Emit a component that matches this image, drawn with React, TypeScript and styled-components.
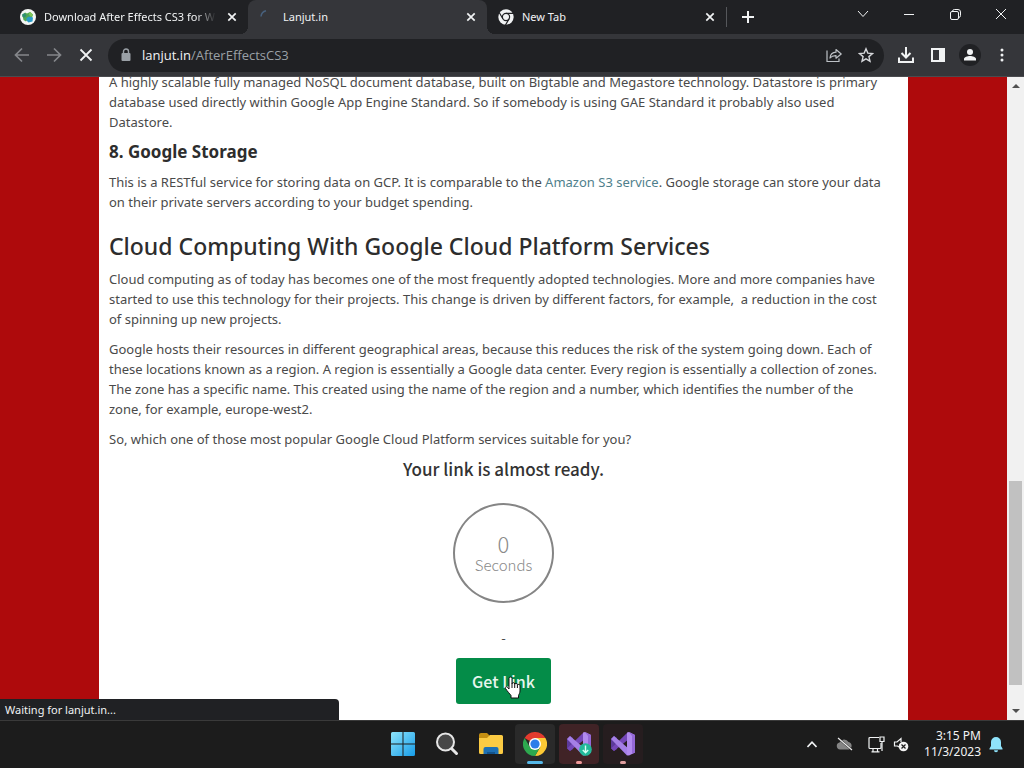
import React from "react";
import styled, { createGlobalStyle, css } from "styled-components";

const GlobalStyle = createGlobalStyle`
  * { box-sizing: border-box; }
  body { margin: 0; background: #1c1c1c; font-family: "Noto Sans", "Open Sans", sans-serif; }
  button { border: 0; padding: 0; margin: 0; background: none; color: inherit; font: inherit; }
  svg { display: block; flex: none; }
`;

const Screen = styled.div`
  height: 100vh;
  display: flex;
  flex-direction: column;
  overflow: hidden;
`;

/* Tab strip */
const TabStrip = styled.header`
  display: flex;
  flex: none;
  height: 34px;
  background: #202124;
  color: #f1f3f4;
`;

const Tab = styled.div<{ $active?: boolean; $first?: boolean }>`
  display: flex;
  align-items: center;
  gap: 8px;
  position: relative;
  width: ${(p) => (p.$first ? 248 : 239)}px;
  min-width: 0;
  padding: 0 8px 0 ${(p) => (p.$first ? 20 : 11)}px;
  ${(p) =>
    p.$active &&
    css`
      background: #35363a;
      border-radius: 8px 8px 0 0;
      &::before,
      &::after {
        content: "";
        position: absolute;
        bottom: 0;
        width: 8px;
        height: 8px;
      }
      &::before {
        right: 100%;
        background: radial-gradient(circle at 0 0, transparent 8px, #35363a 8px);
      }
      &::after {
        left: 100%;
        background: radial-gradient(circle at 100% 0, transparent 8px, #35363a 8px);
      }
    `}
`;

const TabTitle = styled.span<{ $fade?: boolean }>`
  flex: 1;
  min-width: 0;
  overflow: hidden;
  white-space: nowrap;
  font-size: 11px;
  line-height: 16px;
  ${(p) =>
    p.$fade &&
    css`
      mask-image: linear-gradient(to right, #000 88%, transparent);
    `}
`;

const IconButton = styled.button<{ $w: number; $h?: number; $dim?: boolean }>`
  display: flex;
  flex: none;
  align-items: center;
  justify-content: center;
  width: ${(p) => p.$w}px;
  height: ${(p) => p.$h ?? 32}px;
  color: ${(p) => (p.$dim ? "#85878b" : "#f1f3f4")};
`;

const Divider = styled.span`
  width: 1px;
  height: 20px;
  margin-top: 7px;
  background: #55575b;
`;

const WindowControls = styled.div`
  display: flex;
  margin-left: auto;
`;

/* Toolbar */
const Toolbar = styled.nav`
  display: flex;
  flex: none;
  align-items: center;
  height: 43px;
  padding: 0 6px;
  background: #35363a;
  border-bottom: 1px solid #4a4b4f;
`;

const AddressBar = styled.div`
  display: flex;
  flex: 1;
  align-items: center;
  height: 33px;
  margin: 0 6px;
  padding: 0 2px 0 12px;
  border-radius: 17px;
  background: #202124;
`;

const AddressText = styled.span`
  flex: 1;
  margin-left: 10px;
  font-family: "Open Sans", "Noto Sans", sans-serif;
  font-size: 13px;
  line-height: 20px;
  color: #9aa0a6;
  b { font-weight: 400; color: #f1f3f4; }
`;

const Avatar = styled.span`
  display: flex;
  align-items: center;
  justify-content: center;
  width: 22px;
  height: 22px;
  border-radius: 50%;
  background: #202124;
`;

/* Page viewport */
const Viewport = styled.div`
  display: flex;
  flex: 1;
  min-height: 0;
  position: relative;
  overflow: hidden;
`;

const PageBackdrop = styled.main`
  display: flex;
  flex: 1;
  min-width: 0;
  padding: 0 99px;
  background: #ae0a0c;
`;

const Article = styled.article`
  flex: 1;
  min-width: 0;
  margin-top: -5px;
  padding: 0 10px;
  background: #fff;
  color: #4a4a4a;
  font-size: 13px;
  line-height: 20px;
`;

const Paragraph = styled.p`
  margin: 0 0 10px;
  white-space: nowrap;
`;

const Link = styled.a`
  color: #4f7f8c;
  text-decoration: none;
`;

const SectionTitle = styled.h2`
  margin: 19px 0 8px;
  font-size: 23px;
  line-height: 30px;
  font-weight: 500;
  color: #2d2d2d;
`;

const ItemTitle = styled.h3`
  margin: 0 0 10px;
  font-size: 17px;
  line-height: 20px;
  font-weight: 700;
  color: #2d2d2d;
`;

const LinkGate = styled.section`
  display: flex;
  flex-direction: column;
  align-items: center;
  font-family: "Noto Sans CJK SC", "Noto Sans", sans-serif;
`;

const GateTitle = styled.h3`
  margin: 0 0 24px;
  font-size: 17px;
  line-height: 20px;
  font-weight: 500;
  color: #333;
`;

const Countdown = styled.div`
  display: flex;
  flex-direction: column;
  align-items: center;
  justify-content: center;
  width: 101px;
  height: 100px;
  border: 2px solid #858585;
  border-radius: 50%;
  color: #8a8a8a;
  font-weight: 300;
  font-size: 15px;
  line-height: 20px;
`;

const Count = styled.span`
  font-size: 22px;
  line-height: 24px;
`;

const Dash = styled.span`
  margin: 25px 0 10px;
`;

const GetLink = styled.button`
  position: relative;
  width: 95px;
  height: 46px;
  border-radius: 3px;
  background: #048c48;
  color: #e8f6ee;
  font-size: 16px;
  font-weight: 500;
`;

const Cursor = styled.svg`
  position: absolute;
  left: 48px;
  top: 17px;
`;

const Scrollbar = styled.div`
  display: flex;
  flex-direction: column;
  align-items: center;
  flex: none;
  width: 17px;
  background: #f1f1f1;
  color: #505050;
`;

const Track = styled.div`
  display: flex;
  flex-direction: column;
  justify-content: flex-end;
  flex: 1;
  padding-bottom: 18px;
`;

const Thumb = styled.div`
  width: 13px;
  height: 204px;
  background: #c1c1c1;
`;

const StatusBubble = styled.output`
  position: absolute;
  left: 0;
  bottom: 0;
  width: 339px;
  height: 21px;
  padding-left: 5px;
  border-radius: 0 4px 0 0;
  background: #202124;
  color: #f1f3f4;
  font-size: 11px;
  line-height: 21px;
`;

/* Taskbar */
const Taskbar = styled.footer`
  display: grid;
  grid-template-columns: 1fr auto 1fr;
  align-items: center;
  flex: none;
  height: 48px;
  padding-bottom: 1px;
  background: #1c1c1c;
  border-top: 1px solid #3a3a3a;
  color: #f3f3f3;
`;

const Apps = styled.div`
  display: flex;
  grid-column: 2;
  gap: 4px;
  padding-left: 2px;
`;

const AppButton = styled.button<{ $bg?: string; $mark?: string; $wide?: boolean }>`
  display: flex;
  align-items: center;
  justify-content: center;
  position: relative;
  width: 40px;
  height: 40px;
  border-radius: 4px;
  background: ${(p) => p.$bg ?? "transparent"};
  ${(p) =>
    p.$mark &&
    css`
      &::after {
        content: "";
        position: absolute;
        bottom: 0;
        width: ${p.$wide ? 16 : 6}px;
        height: 3px;
        border-radius: 2px;
        background: ${p.$mark};
      }
    `}
`;

const Tray = styled.div`
  display: flex;
  align-items: center;
  justify-content: flex-end;
  padding-right: 20px;
`;

const Clock = styled.time`
  margin: 0 7px 0 14px;
  text-align: right;
  white-space: nowrap;
  font-size: 12px;
  line-height: 16px;
`;

const stroke = { fill: "none", stroke: "currentColor" } as const;

const CloseGlyph = () => (
  <svg width="10" height="10" viewBox="0 0 10 10" {...stroke} strokeWidth="1.7">
    <path d="M1.3 1.3l7.4 7.4M8.7 1.3l-7.4 7.4" />
  </svg>
);

const Arrow = ({ flip }: { flip?: boolean }) => (
  <svg width="16" height="16" viewBox="0 0 16 16" {...stroke} strokeWidth="1.7">
    <path d={flip ? "M1 8h13M8 1.5L14.5 8 8 14.5" : "M15 8H2M8 1.5L1.5 8 8 14.5"} />
  </svg>
);

const SiteIcon = () => (
  <svg width="16" height="16" viewBox="0 0 16 16">
    <circle cx="8" cy="8" r="8" fill="#f4f7f5" />
    <path d="M2.500 6.500L5 3.500l2 1 3-1.500 3 2.500-1 3-4 1.500-2 2.500-2.500-1.500z" fill="#4fa853" />
    <path d="M2 5.500l2.500-1.500 2 2.500-1.500 2-2.500-.5z" fill="#2f8f72" />
    <path d="M6.500 9l2.500-1.500 4 1-.5 4-4 1-2-2z" fill="#2a9bc9" />
    <path d="M8.500 5l2-2 2.500 3-2 2z" fill="#7fc65a" />
  </svg>
);

const ChromeMono = () => (
  <svg width="16" height="16" viewBox="0 0 24 24">
    <circle cx="12" cy="12" r="11.500" fill="#f1f3f4" />
    <g fill="none" stroke="#202124" strokeWidth="1.800">
      <circle cx="12" cy="12" r="5.400" />
      <path d="M12 6.600h11M7.300 14.700L1.800 5.200M16.700 14.700L11.200 24.200" />
    </g>
  </svg>
);

const ChromeColor = () => (
  <svg width="24" height="24" viewBox="0 0 24 24">
    <path d="M12 12L1.6 6A12 12 0 0 1 22.4 6z" fill="#e33b2e" />
    <path d="M12 6h10.4A12 12 0 0 1 12 24l5.2-9z" fill="#fcc934" />
    <path d="M6.8 15L1.6 6A12 12 0 0 0 12 24l5.2-9z" fill="#2da94f" />
    <circle cx="12" cy="12" r="6" fill="#fff" />
    <circle cx="12" cy="12" r="4.6" fill="#2b7de9" />
  </svg>
);

const StudioIcon = ({ badge }: { badge?: boolean }) => (
  <svg width="26" height="26" viewBox="0 0 26 26">
    <path d="M1 8l3-3 3 2v11l-3 2-3-3z" fill="#5c3a9c" />
    <path d="M4 20L1 17.500 17 2l2 0v6z" fill="#7547b8" />
    <path d="M1 8l3-3 15 13v6l-2 .5z" fill="#a57fe6" />
    <path d="M17 1.500l2-.5 6 3v17.500l-6 3-2-.5z" fill="#b18aee" />
    <path d="M19 1l6 3v17.500l-3 1.500V5z" fill="#9468d6" />
    {badge && (
      <>
        <circle cx="19.500" cy="18.500" r="6.300" fill="#23b99a" />
        <path d="M19.500 14.500v7M16.800 19l2.700 2.700 2.700-2.700" fill="none" stroke="#d8fff4" strokeWidth="1.400" />
      </>
    )}
  </svg>
);

export default function App() {
  return (
    <Screen>
      <GlobalStyle />
      <TabStrip>
        <Tab $first>
          <SiteIcon />
          <TabTitle $fade>Download After Effects CS3 for Windows</TabTitle>
          <IconButton $w={16} $h={16} aria-label="Close tab"><CloseGlyph /></IconButton>
        </Tab>
        <Tab $active>
          <svg width="16" height="16" viewBox="0 0 16 16" fill="none" stroke="#48617d" strokeWidth="1.5">
            <path d="M2 7.500A6.500 6.500 0 0 1 7 1.800" />
          </svg>
          <TabTitle>Lanjut.in</TabTitle>
          <IconButton $w={16} $h={16} aria-label="Close tab"><CloseGlyph /></IconButton>
        </Tab>
        <Tab>
          <ChromeMono />
          <TabTitle>New Tab</TabTitle>
          <IconButton $w={16} $h={16} aria-label="Close tab"><CloseGlyph /></IconButton>
        </Tab>
        <Divider />
        <IconButton $w={42} $h={34} aria-label="New tab">
          <svg width="12" height="12" viewBox="0 0 12 12" {...stroke} strokeWidth="2">
            <path d="M6 0v12M0 6h12" />
          </svg>
        </IconButton>
        <WindowControls>
          <IconButton $w={46} $h={28} aria-label="Search tabs">
            <svg width="12" height="8" viewBox="0 0 12 8" {...stroke}><path d="M1 1l5 5.500L11 1" /></svg>
          </IconButton>
          <IconButton $w={46} $h={28} aria-label="Minimize">
            <svg width="10" height="3" viewBox="0 0 10 3" {...stroke}><path d="M0 1.500h10" /></svg>
          </IconButton>
          <IconButton $w={46} $h={28} aria-label="Restore">
            <svg width="11" height="11" viewBox="0 0 11 11" {...stroke}>
              <rect x="0.5" y="2.500" width="8" height="8" rx="1.500" />
              <path d="M2.500 2.200Q2.700 .5 4.500 .5h3.500q2.500 0 2.500 2.500v3.500q0 1.800-1.700 2" />
            </svg>
          </IconButton>
          <IconButton $w={46} $h={28} aria-label="Close window">
            <svg width="12" height="12" viewBox="0 0 12 12" {...stroke}><path d="M1 1l10 10M11 1L1 11" /></svg>
          </IconButton>
        </WindowControls>
      </TabStrip>

      <Toolbar>
        <IconButton $w={32} $dim aria-label="Back"><Arrow /></IconButton>
        <IconButton $w={32} $dim aria-label="Forward"><Arrow flip /></IconButton>
        <IconButton $w={32} aria-label="Stop loading">
          <svg width="14" height="14" viewBox="0 0 14 14" {...stroke} strokeWidth="1.800">
            <path d="M1.500 1.500l11 11M12.500 1.500l-11 11" />
          </svg>
        </IconButton>
        <AddressBar>
          <svg width="12" height="14" viewBox="0 0 12 14" fill="#9aa0a6">
            <rect x="1.500" y="5" width="9" height="8" rx="1" />
            <path d="M3.500 5.500V3.500a2.500 2.500 0 0 1 5 0v2" fill="none" stroke="#9aa0a6" strokeWidth="1.400" />
          </svg>
          <AddressText><b>lanjut.in</b>/AfterEffectsCS3</AddressText>
          <IconButton $w={32} $dim aria-label="Share">
            <svg width="16" height="16" viewBox="0 0 16 16" fill="none" stroke="#bdc1c6" strokeWidth="1.200">
              <path d="M1 3.500v11h12v-3" />
              <path d="M4 11q.5-5.500 6-5.800V2.500L15.200 7 10 11.200V8.600Q6 8.500 4 11z" strokeLinejoin="round" />
            </svg>
          </IconButton>
          <IconButton $w={32} aria-label="Bookmark this tab">
            <svg width="16" height="16" viewBox="0 0 16 16" fill="none" stroke="#d5d7da" strokeWidth="1.400">
              <path d="M8 1.800l1.800 4.300 4.700.4-3.600 3.100 1.100 4.600L8 11.800l-4 2.400 1.100-4.600L1.500 6.500l4.700-.4z" />
            </svg>
          </IconButton>
        </AddressBar>
        <IconButton $w={32} aria-label="Downloads">
          <svg width="16" height="16" viewBox="0 0 16 16" {...stroke} strokeWidth="2">
            <path d="M8 0v10M3.500 6L8 10.500 12.500 6M1 10.500V15h14v-4.500" />
          </svg>
        </IconButton>
        <IconButton $w={32} aria-label="Side panel">
          <svg width="14" height="14" viewBox="0 0 14 14" {...stroke} strokeWidth="2">
            <rect x="1" y="1" width="12" height="12" />
            <path d="M8 1h5v12H8z" fill="currentColor" stroke="none" />
          </svg>
        </IconButton>
        <IconButton $w={32} aria-label="Profile">
          <Avatar>
            <svg width="14" height="14" viewBox="0 0 14 14" fill="currentColor">
              <circle cx="7" cy="4" r="3" />
              <path d="M1 12.500V11c0-2 3.500-3 6-3s6 1 6 3v1.500z" />
            </svg>
          </Avatar>
        </IconButton>
        <IconButton $w={32} aria-label="Menu">
          <svg width="4" height="14" viewBox="0 0 4 14" fill="currentColor">
            <circle cx="2" cy="2" r="1.500" /><circle cx="2" cy="7" r="1.500" /><circle cx="2" cy="12" r="1.500" />
          </svg>
        </IconButton>
      </Toolbar>

      <Viewport>
        <PageBackdrop>
          <Article>
            <Paragraph>
              A highly scalable fully managed NoSQL document database, built on Bigtable and Megastore technology. Datastore is primary<br />
              database used directly within Google App Engine Standard. So if somebody is using GAE Standard it probably also used<br />
              Datastore.
            </Paragraph>
            <ItemTitle>8. Google Storage</ItemTitle>
            <Paragraph>
              This is a RESTful service for storing data on GCP. It is comparable to the <Link href="#s3">Amazon S3 service</Link>. Google storage can store your data<br />
              on their private servers according to your budget spending.
            </Paragraph>
            <SectionTitle>Cloud Computing With Google Cloud Platform Services</SectionTitle>
            <Paragraph>
              Cloud computing as of today has becomes one of the most frequently adopted technologies. More and more companies have<br />
              started to use this technology for their projects. This change is driven by different factors, for example, &nbsp;a reduction in the cost<br />
              of spinning up new projects.
            </Paragraph>
            <Paragraph>
              Google hosts their resources in different geographical areas, because this reduces the risk of the system going down. Each of<br />
              these locations known as a region. A region is essentially a Google data center. Every region is essentially a collection of zones.<br />
              The zone has a specific name. This created using the name of the region and a number, which identifies the number of the<br />
              zone, for example, europe-west2.
            </Paragraph>
            <Paragraph>So, which one of those most popular Google Cloud Platform services suitable for you?</Paragraph>
            <LinkGate>
              <GateTitle>Your link is almost ready.</GateTitle>
              <Countdown>
                <Count>0</Count>
                <span>Seconds</span>
              </Countdown>
              <Dash>-</Dash>
              <GetLink>
                Get Link
                <Cursor width="18" height="24" viewBox="0 0 18 24" fill="#fff" stroke="#111" strokeWidth="1" strokeLinejoin="round">
                  <path d="M5 14V3.500a1.500 1.500 0 0 1 3 0V9a1.300 1.300 0 0 1 2.700 0v.6a1.300 1.300 0 0 1 2.700.2v.8a1.300 1.300 0 0 1 2.600.2V16c0 2-1 3-1.500 4.500V23H7v-2.500C5.500 18.500 3.500 16.500 1.500 13.500c-.8-1.500 1-2.500 2-1.200z" />
                  <path d="M8 9v4M10.700 9.600V13M13.400 10.600V13" fill="none" />
                </Cursor>
              </GetLink>
            </LinkGate>
          </Article>
        </PageBackdrop>
        <Scrollbar>
          <svg width="17" height="17" viewBox="0 0 17 17" fill="currentColor"><path d="M5 11l4-4 4 4z" /></svg>
          <Track><Thumb /></Track>
          <svg width="17" height="17" viewBox="0 0 17 17" fill="currentColor"><path d="M5 6l4 4 4-4z" /></svg>
        </Scrollbar>
        <StatusBubble>Waiting for lanjut.in...</StatusBubble>
      </Viewport>

      <Taskbar>
        <Apps>
          <AppButton aria-label="Start">
            <svg width="24" height="24" viewBox="0 0 24 24">
              <defs>
                <linearGradient id="win" x1="0" y1="0" x2="1" y2="1">
                  <stop offset="0" stopColor="#8ee4fb" /><stop offset="1" stopColor="#169ce8" />
                </linearGradient>
              </defs>
              <path d="M1.500 0H11.500V11.500H0V1.500Q0 0 1.500 0zM12.500 0H22.500Q24 0 24 1.500V11.500H12.500zM0 12.500H11.500V24H1.500Q0 24 0 22.500zM12.500 12.500H24V22.500Q24 24 22.500 24H12.500z" fill="url(#win)" />
            </svg>
          </AppButton>
          <AppButton aria-label="Search">
            <svg width="24" height="24" viewBox="0 0 24 24" fill="none" stroke="#e6e6e6">
              <path d="M16.500 16.500l5 5" strokeWidth="3" strokeLinecap="round" />
              <circle cx="10.500" cy="10" r="8.500" strokeWidth="2" fill="#474747" />
            </svg>
          </AppButton>
          <AppButton aria-label="File Explorer">
            <svg width="24" height="24" viewBox="0 0 24 24">
              <path d="M0 3q0-2 2-2h6l3 3v5H0z" fill="#c58f12" />
              <path d="M0 6h8l3-3h11.500Q24 3 24 4.500V20.500Q24 22 22.500 22h-21Q0 22 0 20.500z" fill="#fbcb43" />
              <path d="M4.500 22v-5q0-2 2-2h11q2 0 2 2v5z" fill="#1d70b4" />
              <path d="M8 22v-2h8v2z" fill="#13548d" />
            </svg>
          </AppButton>
          <AppButton $bg="#2a2a2a" $mark="#55b8e8" $wide aria-label="Google Chrome"><ChromeColor /></AppButton>
          <AppButton $bg="#402326" $mark="#f09a9a" aria-label="Visual Studio Installer"><StudioIcon badge /></AppButton>
          <AppButton $bg="#261d1f" $mark="#e0a0a0" aria-label="Visual Studio"><StudioIcon /></AppButton>
        </Apps>
        <Tray>
          <IconButton $w={32} aria-label="Show hidden icons">
            <svg width="10" height="7" viewBox="0 0 10 7" {...stroke} strokeWidth="1.600"><path d="M.5 6L5 1.200 9.500 6" /></svg>
          </IconButton>
          <IconButton $w={32} aria-label="OneDrive">
            <svg width="17" height="14" viewBox="0 0 17 14">
              <path d="M4 12.500a3.500 3.500 0 0 1-.5-6.900 5 5 0 0 1 9-.6 3.900 3.900 0 0 1 .5 7.500z" fill="#858585" />
              <path d="M2 1l14 12" stroke="#1c1c1c" strokeWidth="2" />
              <path d="M2 1l14 12" stroke="#eee" strokeWidth="1.200" />
            </svg>
          </IconButton>
          <IconButton $w={32} aria-label="Network">
            <svg width="17" height="17" viewBox="0 0 17 17" {...stroke} strokeWidth="1.200">
              <path d="M11 1.500H2Q1 1.500 1 2.500v9q0 1 1 1h10q1 0 1-1V7M5 12.500v3.300M9.500 12.500v3.300M3.500 15.800h8" />
              <path d="M12 1h4v4.500h-4zM14 5.500V15" />
            </svg>
          </IconButton>
          <IconButton $w={18} aria-label="Volume">
            <svg width="16" height="16" viewBox="0 0 16 16" {...stroke} strokeWidth="1.200">
              <path d="M6 11L4.500 10H1.500V6H4l4-3.500V6" />
              <circle cx="10.500" cy="10.500" r="4.800" fill="#f3f3f3" stroke="none" />
              <path d="M8.500 8.500l4 4M12.500 8.500l-4 4" stroke="#1c1c1c" />
            </svg>
          </IconButton>
          <Clock>3:15 PM<br />11/3/2023</Clock>
          <svg width="16" height="17" viewBox="0 0 16 17" fill="#8fe3fb">
            <path d="M8 1a5 5 0 0 1 5 5v4l1.500 2.500v1h-13v-1L3 10V6a5 5 0 0 1 5-5z" />
            <path d="M6 14.300h4a2 2 0 0 1-4 0z" />
          </svg>
        </Tray>
      </Taskbar>
    </Screen>
  );
}
